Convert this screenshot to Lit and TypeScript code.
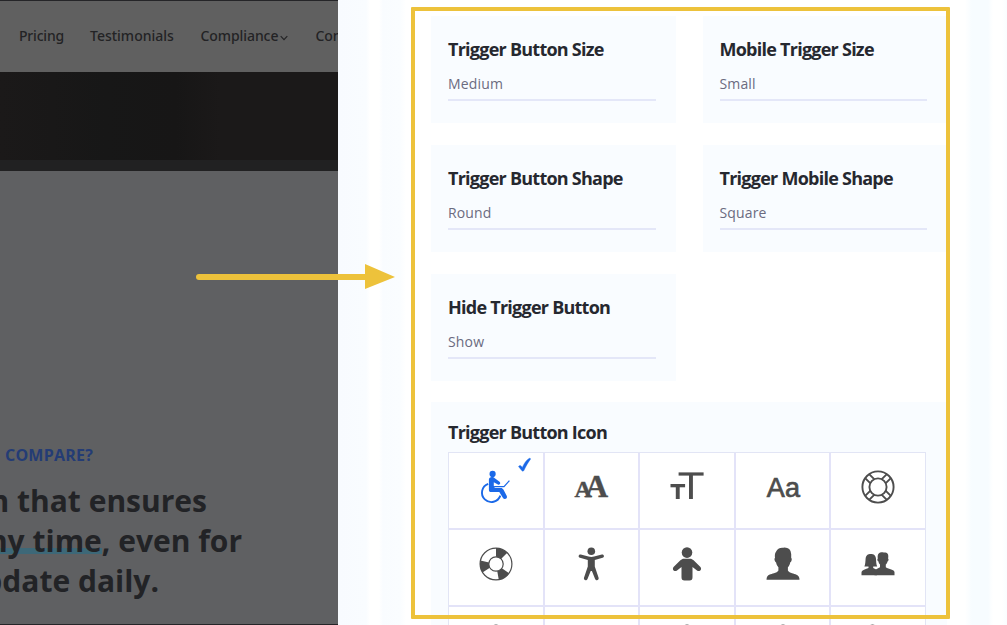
import { LitElement, html, css, svg } from "lit";
import { customElement, property } from "lit/decorators.js";

const buoySegment = (r: number) => svg`<g transform="rotate(${r} 17 17)"><path d="M17 1 A16 16 0 0 1 28.3 5.7 L22 12 A7 7 0 0 0 17 9.8Z"/></g>`;

const icons: Record<string, unknown> = {
  wheelchair: svg`<g transform="translate(1.2 .2)"><g fill="#1b69e8"><circle cx="12.4" cy="3.7" r="3.1"/><path d="M8.7 9.4c0-3.4 4.6-3.2 5.9-1.4l4.4 3.4c2 1.6.8 3.8-1.3 3l-4.1-2.4v3.9h.8v1.8h6.2c1.2 0 2 .6 2.6 1.6l3.4 6.5c1.1 2.6-2.4 4.3-3.8 2.1l-3.7-6h-8.2c-1.6 0-2.2-.9-2.2-2.3z"/></g><g fill="none" stroke="#1b69e8"><path d="M8 13.6a9.4 9.4 0 1 0 12.1 11.8" stroke-width="1.9"/><path d="M14 16.5h9.8l5.4-6" stroke-width="1.2"/></g></g>`,
  serif: svg`<text class="serif" font-size="24" x="-.4" y="27.4">A</text><text class="serif" font-size="32" x="10.1" y="27.4">A</text>`,
  type: svg`<rect x="8.6" y="2.4" width="25" height="3.2"/><rect x="19" y="5" width="3.9" height="24"/><rect x=".5" y="14" width="14.6" height="3.3"/><rect x="5.8" y="17" width="3.9" height="12"/>`,
  outlineBuoy: svg`<g fill="none" stroke="currentColor" stroke-width="1.9"><circle cx="17" cy="17" r="15.6"/><circle cx="17" cy="17" r="8.6"/>${[0, 90, 180, 270].map((r) => svg`<path transform="rotate(${r} 17 17)" d="M20.8 9.2l4.8-4.8M24.8 13.2l4.8-4.8"/>`)}</g>`,
  buoy: svg`<g fill="none" stroke="currentColor" stroke-width="1.2"><circle cx="17" cy="17" r="15.9"/><circle cx="17" cy="17" r="7.2"/></g>${[0, 125, 238].map(buoySegment)}`,
  arms: svg`<g transform="translate(-.7 0)"><circle cx="17" cy="4.2" r="3.8"/><path d="M6.5 7.6l7.7 2q2.8.6 5.6 0l7.7-2c2.4-.4 3 2.6.8 3.2L20.5 13v6.5l3.8 11.2c.7 2.6-2.5 3.5-3.5 1.3L17.6 24h-1.2L13.2 32c-1 2.2-4.2 1.3-3.5-1.3l3.8-11.2V13l-7.8-2.2c-2.2-.6-1.6-3.6.8-3.2z"/></g>`,
  child: svg`<circle cx="17" cy="5.6" r="5.3"/><path d="M14 11.8h6c1.6 0 2.5.6 3.6 1.5l6.6 6.4c2.4 2.7-.7 5.6-3.2 3.7L22.5 20v10.2c0 2.1-.9 3.3-3 3.3h-5c-2.1 0-3-1.2-3-3.3V20L7 23.4c-2.5 1.9-5.6-1-3.2-3.7l6.6-6.4c1.1-.9 2-1.5 3.6-1.5z"/>`,
  person: svg`<path d="M10 4.8Q12 .2 17.2.7q7.2-.8 8 6.2v4.2c1.2.6.3 4-1 4.4-.3 2.4-1.3 3.7-2.3 4.7v3.2c1 2.2 4.6 2.7 7.6 3.8 3.2 1.1 4 3.2 4 5.6H.5c.1-3 1-4.6 4-5.6 3-1.1 6.9-1.6 7.9-3.8v-3.2c-1-1.1-2-2.5-2.3-4.7-1.4-.7-2.2-3.8-1.1-4.4-.3-2.6-.2-4.7 1-6.3z"/>`,
  people: svg`<path d="M13.5 28.2v-3.5c.2-2.5 3-3 5.5-4.5v-2.6c-1-.9-1.3-1.7-1.5-3-1.2-.3-1.5-2.6-.7-3-.7-4.6 1.3-6.5 5.7-6.2 4.2-.2 5.4 1.6 4.6 6.2.9.5.4 2.7-.6 3-.3 1.4-.8 2.2-1.7 3v2.6c3 2 8.7 2.2 8.7 5v3z"/><path d="M.5 28.2v-2.6c.1-2.7 3.2-2.9 7-4.6v-1.6H3.4c1-1.9 1-5 1.2-7.6.4-3.5 2.3-4.8 5.2-4.8s4.8 1.3 5.2 4.8c.2 2.6.1 5.7 1.2 7.6h-4v1.6l3.8 2v5.2z"/>`,
  dot: svg`<circle cx="17" cy="4" r="3.6"/>`,
  dotLeft: svg`<circle cx="11.5" cy="4" r="3.6"/>`,
  none: "",
};

@customElement("setting-card")
class SettingCard extends LitElement {
  @property() label = "";
  @property() value = "";
  static styles = css`
    :host { display: block; box-sizing: border-box; height: 107px; background: #f9fcff; padding: 20px 20px 0 17px; }
    h3 { margin: 0; height: 26px; font: 700 18px/26px "Open Sans", sans-serif; letter-spacing: -0.75px; color: #26282f; white-space: nowrap; }
    .value { margin-top: 10px; height: 27px; border-bottom: 2px solid #e4e7f8; font: 14px/24px "Open Sans", sans-serif; color: #6b6b80; letter-spacing: 0.15px; }
  `;
  render() {
    return html`<h3>${this.label}</h3><div class="value">${this.value}</div>`;
  }
}

@customElement("app-root")
class AppRoot extends LitElement {
  static styles = css`
    :host { display: block; position: relative; width: 1007px; height: 625px; overflow: hidden; background: #fff; font-family: "Open Sans", sans-serif; }
    .layout { display: grid; grid-template-columns: 338px 669px; height: 625px; }
    .site { overflow: hidden; background: #5f6062; display: flex; flex-direction: column; box-sizing: border-box; border-top: 1px solid #252528; border-bottom: 1px solid #252528; }
    nav { box-sizing: border-box; flex: none; height: 71px; background: #606060; display: flex; padding: 21px 0 0 19px; font: 500 14px/28px "Noto Sans", sans-serif; letter-spacing: -0.08px; color: #232325; white-space: nowrap; }
    nav span { flex: none; }
    nav span:nth-child(1) { width: 71px; letter-spacing: -0.2px; }
    nav span:nth-child(2) { width: 110.5px; letter-spacing: 0; }
    nav span:nth-child(3) { width: 115px; }
    nav svg { width: 8px; height: 6px; margin-left: 2px; }
    .hero { flex: none; height: 88px; background: linear-gradient(90deg, #1b1919 0, #171717 31%, #171616 52%, #1b1919 65%); border-bottom: 11px solid #212122; }
    .copy { padding: 270px 0 0; white-space: nowrap; }
    .eyebrow { margin-left: 5px; font: 700 16px/28px "Open Sans", sans-serif; letter-spacing: 0.22px; color: #243c75; }
    .headline { margin: 12px 0 0; font: 700 30px/40px "Open Sans", sans-serif; color: #222326; }
    .headline div { width: 242px; display: flex; justify-content: flex-end; }
    .headline .first { width: 207px; }
    .headline .last { width: 159px; }
    .mark { background: linear-gradient(#3d6878, #3d6878) 0 27px / 100% 6px no-repeat; }
    .panel { background: linear-gradient(90deg, #f8fbff 0, #f9fcff 28px, #fff 32px, #fff 41px, #f9fcff 45px, #fafdff 62px, #fff 68px, #fff 627px, #f7fcff 634px, #f7fcff 650px, #fff 655px, #fff 664px, #fafdff 669px); padding: 16px 60px 0 93px; overflow: hidden; }
    .cards { display: grid; grid-template-columns: 245px 244px; gap: 22px 26.5px; }
    .icons { margin-top: 21px; height: 230px; padding: 17px 20px 0 17px; background: #f9fcff; }
    .icons h3 { margin: 0; font: 700 18px/26px "Open Sans", sans-serif; letter-spacing: -0.75px; color: #26282f; }
    .grid { display: grid; width: 478px; box-sizing: border-box; grid-template-columns: 96px 95px 96px 95px 94px; grid-auto-rows: 77px; border: 1px solid #e2e5f5; margin-top: 7px; background: #fff; }
    .cell { box-sizing: border-box; border: solid #e3e3f8; border-width: 0 2px 2px 0; position: relative; display: flex; justify-content: center; padding-top: 17px; color: #4d4d4d; }
    .cell:nth-child(5n) { border-right: 0; }
    .cell svg { width: 34px; height: 34px; fill: currentColor; overflow: visible; }
    .serif { font-family: "Liberation Serif", serif; font-weight: 700; stroke: currentColor; stroke-width: .4px; }
    .letters { font: 27px/36px "Liberation Sans", sans-serif; -webkit-text-stroke: .7px; letter-spacing: .3px; padding-left: 2px; }
    .cell .check { position: absolute; left: 69px; top: 4px; width: 13px; height: 15px; }
    .frame { position: absolute; left: 411px; top: 7px; width: 531px; height: 604px; border: 4px solid #edc23b; border-radius: 1px; }
    .arrow { position: absolute; left: 196px; top: 264px; width: 199px; height: 25px; }
  `;
  render() {
    const cards = [["Trigger Button Size", "Medium"], ["Mobile Trigger Size", "Small"], ["Trigger Button Shape", "Round"], ["Trigger Mobile Shape", "Square"], ["Hide Trigger Button", "Show"]];
    const names = ["wheelchair", "serif", "type", "letters", "outlineBuoy", "buoy", "arms", "child", "person", "people", "dot", "none", "dot", "dot", "dotLeft"];
    return html`
      <div class="layout">
        <div class="site">
          <nav><span>Pricing</span><span>Testimonials</span><span>Compliance<svg viewBox="0 0 8 6"><path d="M.7 1.2L4 4.6 7.3 1.2" fill="none" stroke="#232325" stroke-width="1.2"/></svg></span><span>Contact</span></nav>
          <div class="hero"></div>
          <div class="copy">
            <div class="eyebrow">COMPARE?</div>
            <div class="headline">
              <div class="first">n that ensures</div>
              <div><span class="mark">ny time</span>,&nbsp;even for</div>
              <div class="last">pdate daily.</div>
            </div>
          </div>
        </div>
        <div class="panel">
          <div class="cards">${cards.map(([l, v]) => html`<setting-card .label=${l} .value=${v}></setting-card>`)}</div>
          <div class="icons">
            <h3>Trigger Button Icon</h3>
            <div class="grid">${names.map((n) => html`<div class="cell">
              ${n === "letters" ? html`<span class="letters">Aa</span>` : html`<svg viewBox="0 0 34 34">${icons[n]}</svg>`}
              ${n === "wheelchair" ? html`<svg class="check" viewBox="0 0 13 15"><path fill="#1b69e8" stroke="#1b69e8" stroke-width=".4" d="M.5 9.5C2 7.7 3 8.4 4.3 10.4 6.3 6 8.3 3.2 11 1.5c.8-.5 1.7-.2 1.5.7C9.8 5.7 7.8 9.6 6 13.3c-.6 1.2-1.7 1-2.3.2z"/></svg>` : ""}
            </div>`)}</div>
          </div>
        </div>
      </div>
      <div class="frame"></div>
      <svg class="arrow" viewBox="0 0 199 25"><path d="M3 13H171" stroke="#edc23b" stroke-width="6" stroke-linecap="round"/><path d="M169 0L199 13 169 25Z" fill="#edc23b"/></svg>
    `;
  }
}
